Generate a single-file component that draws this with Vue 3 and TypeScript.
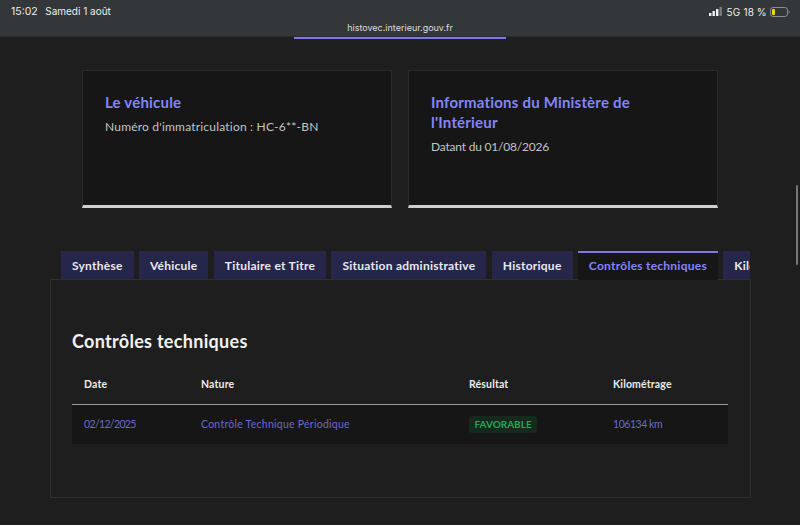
<template>
  <div class="page">
    <header class="browser-bar">
      <div class="status-row">
        <div class="status-left">
          <span class="clock">15:02</span>
          <span>Samedi 1 août</span>
        </div>
        <div class="status-right">
          <svg class="signal" width="14" height="9" viewBox="0 0 14 9">
            <rect x="0" y="6" width="2.4" height="3" fill="#f2f2f2" />
            <rect x="3.5" y="4" width="2.4" height="5" fill="#f2f2f2" />
            <rect x="7" y="2" width="2.4" height="7" fill="#f2f2f2" />
            <rect x="10.5" y="0" width="2.4" height="9" fill="#7b7e80" />
          </svg>
          <span>5G</span>
          <span>18 %</span>
          <svg class="battery" width="20" height="10" viewBox="0 0 20 10">
            <rect x="0.5" y="0.5" width="17" height="9" rx="2.6" fill="none" stroke="#8b8e90" />
            <rect x="2" y="2" width="3" height="6" rx="1" fill="#f5d90a" />
            <path d="M18.6 3.5c.8.3 1.2.9 1.2 1.5s-.4 1.2-1.2 1.5z" fill="#8b8e90" />
          </svg>
        </div>
      </div>
      <div class="url">{{ url }}</div>
    </header>
    <div class="progress"></div>

    <main class="content">
      <section class="cards">
        <article v-for="card in cards" :key="card.title" class="card">
          <h2 class="card-title">{{ card.title }}</h2>
          <p class="card-text" :class="{ numeric: card.numeric }">{{ card.text }}</p>
        </article>
      </section>

      <nav class="tabs">
        <button
          v-for="tab in tabs"
          :key="tab"
          class="tab"
          :class="{ active: tab === activeTab }"
        >{{ tab }}</button>
      </nav>

      <section class="panel">
        <h3 class="panel-title">Contrôles techniques</h3>
        <table class="table">
          <thead>
            <tr>
              <th class="col-date">Date</th>
              <th class="col-nature">Nature</th>
              <th class="col-result">Résultat</th>
              <th>Kilométrage</th>
            </tr>
          </thead>
          <tbody>
            <tr v-for="row in rows" :key="row.date">
              <td class="cell-date">{{ row.date }}</td>
              <td>{{ row.nature }}</td>
              <td><span class="badge">{{ row.result }}</span></td>
              <td class="cell-km">{{ row.km }}</td>
            </tr>
          </tbody>
        </table>
      </section>
    </main>

    <div class="scrollbar"></div>
  </div>
</template>

<script setup lang="ts">
const url = 'histovec.interieur.gouv.fr'

const cards = [
  { title: 'Le véhicule', text: "Numéro d'immatriculation : HC-6**-BN", numeric: false },
  { title: "Informations du Ministère de l'Intérieur", text: 'Datant du 01/08/2026', numeric: true }
]

const tabs = [
  'Synthèse',
  'Véhicule',
  'Titulaire et Titre',
  'Situation administrative',
  'Historique',
  'Contrôles techniques',
  'Kilométrage'
]
const activeTab = 'Contrôles techniques'

const rows = [
  { date: '02/12/2025', nature: 'Contrôle Technique Périodique', result: 'FAVORABLE', km: '106134 km' }
]
</script>

<style>
html,
body {
  margin: 0;
  background: #1e1e1e;
  overflow: hidden;
}
</style>

<style scoped>
.page {
  position: relative;
  width: 800px;
  height: 525px;
  overflow: hidden;
  background: #1e1e1e;
  font-family: Lato, "Open Sans", sans-serif;
  color: #c4c4c4;
}

.browser-bar {
  height: 37px;
  box-sizing: border-box;
  padding: 5px 27px 0 11px;
  background: #33373a;
  border-bottom: 1px solid #2b2e30;
  font-family: Inter, "Liberation Sans", sans-serif;
  color: #eceded;
}

.status-row {
  display: flex;
  justify-content: space-between;
  align-items: center;
  height: 13px;
  font-size: 10px;
}

.status-left {
  display: flex;
  gap: 7.5px;
}

.clock {
  font-size: 10.5px;
}

.status-right {
  display: flex;
  align-items: center;
  gap: 3.5px;
  margin-right: -17px;
  font-size: 10px;
}

.url {
  margin-top: 4px;
  margin-right: -16px;
  text-align: center;
  font-size: 9px;
  line-height: 12px;
  color: #dcdddd;
}

.progress {
  width: 212px;
  height: 2px;
  margin-left: 294px;
  background: #7b78e8;
}

.content {
  padding-top: 31px;
}

.cards {
  display: flex;
  gap: 16.5px;
  padding-left: 82px;
}

.card {
  box-sizing: border-box;
  width: 309.5px;
  height: 138px;
  padding: 21px 22px 0;
  background: #161616;
  border: 1px solid #2a2a2a;
  border-bottom: 3px solid #cecece;
}

.card-title {
  margin: 0;
  max-width: 250px;
  font-size: 15px;
  line-height: 20px;
  font-weight: 700;
  color: #8585f6;
  letter-spacing: 0.2px;
}

.card-text {
  margin: 5px 0 0;
  font-size: 12px;
  line-height: 20px;
  color: #c4c4c4;
  letter-spacing: 0.2px;
}

.card-text.numeric {
  letter-spacing: -0.2px;
}

.tabs {
  position: relative;
  z-index: 1;
  display: flex;
  align-items: flex-start;
  gap: 5.3px;
  width: 689px;
  height: 29px;
  margin: 43px 0 0 61px;
  overflow: hidden;
}

.tab {
  flex: none;
  height: 28px;
  padding: 0 11px;
  border: 0;
  background: #26264a;
  font-family: inherit;
  font-size: 12px;
  font-weight: 700;
  letter-spacing: 0.25px;
  color: #e8e8f0;
}

.tab.active {
  height: 29px;
  padding-bottom: 2px;
  background: #161616;
  border-top: 2px solid #7b78e8;
  color: #8585f6;
}

.panel {
  box-sizing: border-box;
  width: 701px;
  height: 219px;
  margin: -1px 0 0 50px;
  padding: 49px 21px 0;
  border: 1px solid #2f2f2f;
}

.panel-title {
  margin: 0;
  font-size: 18px;
  line-height: 24px;
  font-weight: 700;
  letter-spacing: 0.3px;
  color: #f2f2f2;
}

.table {
  width: 656px;
  margin-top: 11px;
  border-collapse: collapse;
  table-layout: fixed;
  font-size: 10.5px;
}

.table th,
.table td {
  box-sizing: border-box;
  padding: 0 0 0 12px;
}

.col-date {
  width: 117px;
}

.col-nature {
  width: 268px;
}

.col-result {
  width: 144px;
}

.table th {
  height: 40px;
  text-align: left;
  font-weight: 700;
  color: #ececec;
  letter-spacing: 0.15px;
  border-bottom: 1px solid #9a9a9a;
}

.table td {
  height: 40px;
  background: #161616;
  color: #6a6ac8;
  letter-spacing: 0.25px;
}

.table td.cell-date {
  letter-spacing: -0.65px;
}

.table td.cell-km {
  letter-spacing: -0.45px;
}

.badge {
  display: inline-block;
  padding: 0 5.5px;
  line-height: 17px;
  border-radius: 3px;
  background: #15291c;
  color: #27a658;
  font-size: 10px;
  font-weight: 700;
  letter-spacing: 0;
}

.scrollbar {
  position: absolute;
  left: 796px;
  top: 185px;
  width: 2px;
  height: 80px;
  border-radius: 1px;
  background: #777777;
}
</style>
